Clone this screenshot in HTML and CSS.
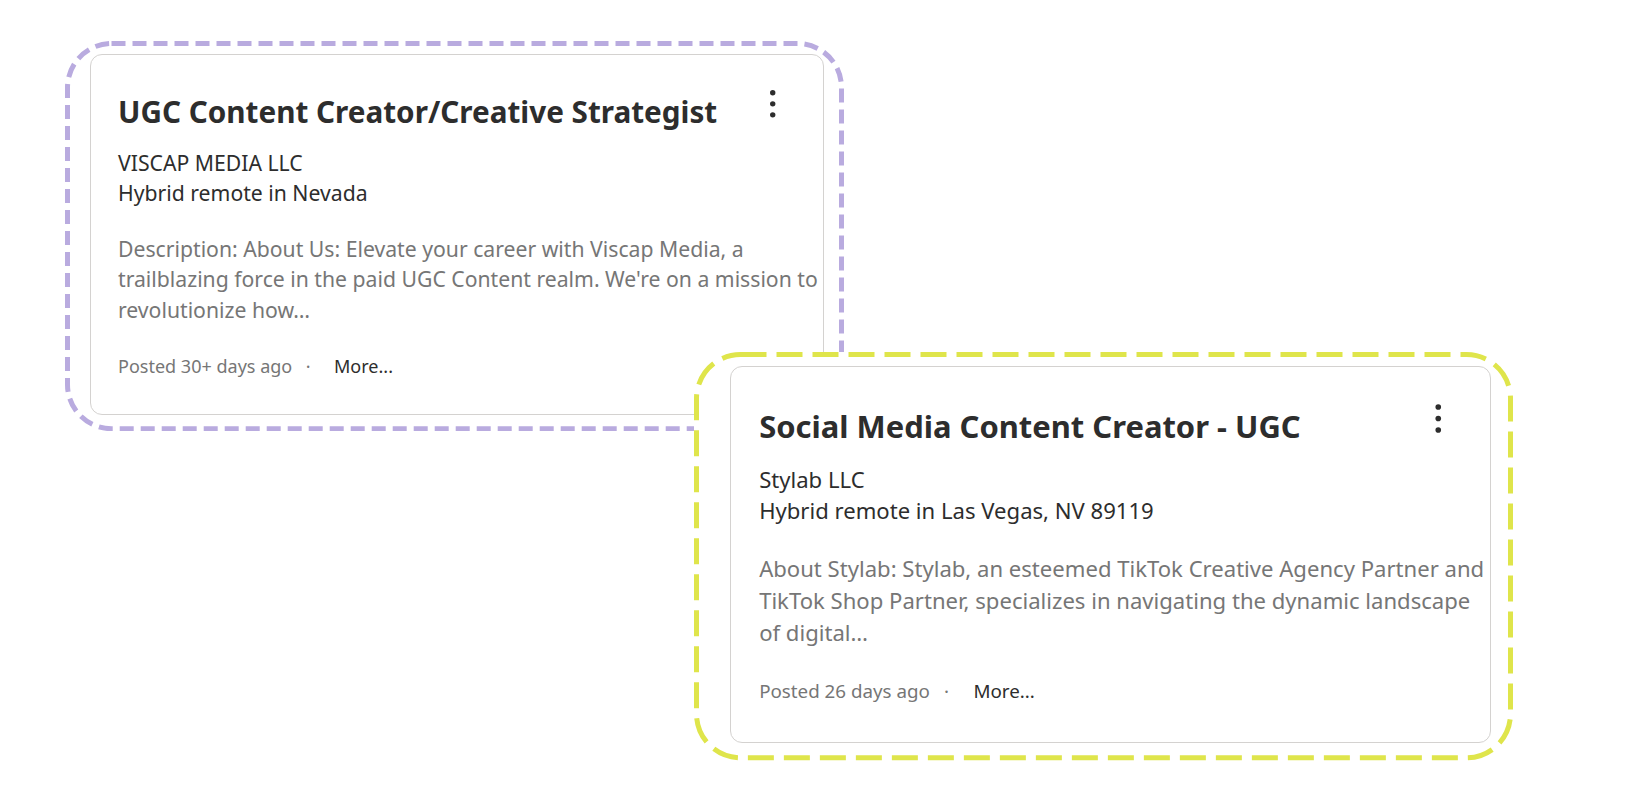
FILE: index.html
```html
<!DOCTYPE html>
<html lang="en">
<head>
    <meta charset="UTF-8">
    <meta name="viewport" content="width=device-width, initial-scale=1.0">
    <title>Saved Jobs</title>
    <link rel="stylesheet" href="styles.css">
</head>
<body>
    <div class="board">
        <!-- First highlighted listing -->
        <div class="highlight highlight--lilac">
            <article class="job-card job-card--sm">
                <div class="job-head">
                    <h2 class="job-title">UGC Content Creator/Creative Strategist</h2>
                    <button class="job-menu" aria-label="More actions">
                        <svg viewBox="0 0 24 28"><circle cx="12" cy="3.6" r="2.55"/><circle cx="12" cy="14" r="2.55"/><circle cx="12" cy="24.4" r="2.55"/></svg>
                    </button>
                </div>
                <p class="job-company">VISCAP MEDIA LLC</p>
                <p class="job-location">Hybrid remote in Nevada</p>
                <p class="job-desc">Description: About Us: Elevate your career with Viscap Media, a trailblazing force in the paid UGC Content realm. We're on a mission to revolutionize how…</p>
                <div class="job-meta">
                    <span class="job-date">Posted 30+ days ago</span><span class="job-sep">·</span><a class="job-more" href="#">More...</a>
                </div>
            </article>
            <svg class="highlight-outline"><rect/></svg>
        </div>

        <!-- Second highlighted listing, laid over the first -->
        <div class="highlight highlight--lime">
            <article class="job-card job-card--lg">
                <div class="job-head">
                    <h2 class="job-title">Social Media Content Creator - UGC</h2>
                    <button class="job-menu" aria-label="More actions">
                        <svg viewBox="0 0 24 28"><circle cx="12" cy="3.6" r="2.55"/><circle cx="12" cy="14" r="2.55"/><circle cx="12" cy="24.4" r="2.55"/></svg>
                    </button>
                </div>
                <p class="job-company">Stylab LLC</p>
                <p class="job-location">Hybrid remote in Las Vegas, NV 89119</p>
                <p class="job-desc">About Stylab: Stylab, an esteemed TikTok Creative Agency Partner and TikTok Shop Partner, specializes in navigating the dynamic landscape of digital…</p>
                <div class="job-meta">
                    <span class="job-date">Posted 26 days ago</span><span class="job-sep">·</span><a class="job-more" href="#">More...</a>
                </div>
            </article>
            <svg class="highlight-outline"><rect/></svg>
        </div>
    </div>
</body>
</html>
```

FILE: styles.css
```css
:root {
    --ink: #2d2d2d;
    --muted: #767676;
    --card-line: #d4d2d0;
    --lilac: #b9abdf;
    --lime: #dfe54b;
}

body {
    margin: 0;
    background: #fff;
    font-family: 'Noto Sans', sans-serif;
    color: var(--ink);
}

.board {
    padding-top: 41px;
}

/* dashed frames round each card */
.highlight {
    position: relative;
    width: fit-content;
    background: #fff;
    border-radius: 46px;
}

.highlight--lilac {
    margin-left: 65px;
    padding: 13px 20px 16px 25px;
}

.highlight--lime {
    margin: -79px 0 0 694px;
    padding: 14px 22px 18px 36px;
}

.highlight-outline {
    position: absolute;
    inset: 0;
    width: 100%;
    height: 100%;
    pointer-events: none;
}

.highlight-outline rect {
    x: 2.5px;
    y: 2.5px;
    width: calc(100% - 5px);
    height: calc(100% - 5px);
    rx: 44px;
    fill: none;
    stroke-width: 5;
}

.highlight--lilac rect {
    stroke: var(--lilac);
    stroke-dasharray: 14 7;
}

.highlight--lime rect {
    stroke: var(--lime);
    stroke-dasharray: 26 10;
}

/* job card */
.job-card {
    box-sizing: border-box;
    padding: 1.825em 0 1.67em 1.274em;
    background: #fff;
    border: 1px solid var(--card-line);
    border-radius: 12px;
    line-height: 1.44;
}

.job-card--sm {
    width: 734px;
    font-size: 21.2px;
}

.job-card--lg {
    width: 761px;
    font-size: 22.1px;
}

.job-head {
    display: flex;
    align-items: flex-start;
    padding-right: 1.76em;
}

.job-title {
    flex: 1;
    margin: 0;
    font-size: 1.4em;
    line-height: 1.2;
    font-weight: 700;
    color: var(--ink);
}

.job-menu {
    font: inherit;
    width: 1.2em;
    height: 1.4em;
    margin-top: -0.21em;
    padding: 0;
    border: none;
    background: none;
    cursor: pointer;
}

.job-menu svg {
    display: block;
    width: 100%;
    height: 100%;
    fill: var(--ink);
}

.job-company {
    margin: 0.86em 0 0;
}

.job-location {
    margin: 0;
}

.job-desc {
    margin: 1.18em 0 0;
    color: var(--muted);
}

.job-meta {
    margin-top: 1.576em;
    font-size: 0.85em;
    line-height: 1.4;
    color: var(--muted);
}

.job-sep {
    margin: 0 1.3em 0 0.75em;
}

.job-more {
    color: var(--ink);
    text-decoration: none;
}
```
